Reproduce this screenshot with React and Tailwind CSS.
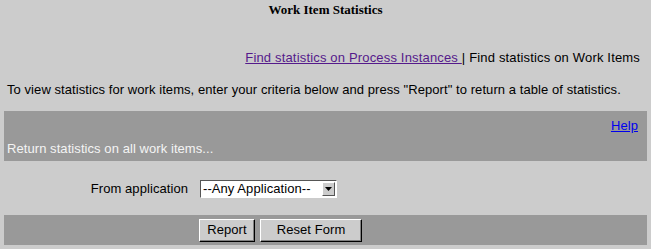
import {useState} from "react";

const App = () => {
    const [app, setApp] = useState("--Any Application--");

    return (
        <div className="min-h-[249px] bg-[#cccccc] px-[4px] font-['Liberation_Sans',Arial,sans-serif] text-[13px] leading-[16px] tracking-[0.07px] text-black">
            <div className="pt-[2px] h-[40px] text-center font-['Liberation_Serif',serif] font-bold text-[13px] tracking-normal">
                Work Item Statistics
            </div>
            <div className="h-[32px] pt-[10px] pr-[7px] text-right tracking-[0.17px]">
                <a href="#" className="text-[#551a8b] underline">Find statistics on Process Instances </a>
                | Find statistics on Work Items
            </div>
            <p className="h-[39px] pt-[10px] px-[3px]">
                To view statistics for work items, enter your criteria below and press "Report" to return a table of statistics.
            </p>
            <div className="h-[50px] bg-[#999999] flex flex-col justify-between px-[3px] pt-[7px] pb-[4px] text-[#f4f4f4]">
                <div className="text-right pr-[6px]">
                    <a href="#" className="text-[#0000ee] underline">Help</a>
                </div>
                <div>Return statistics on all work items...</div>
            </div>
            <div className="h-[54px] flex items-center pt-[2px]">
                <span className="w-[196px] text-right pr-[12px]">From application</span>
                <div className="flex items-center w-[137px] h-[18px] bg-white border border-t-[#555555] border-l-[#555555] border-r-white border-b-white">
                    <span className="flex-1 pl-[2px] leading-[16px]">{app}</span>
                    <button
                        onClick={() => setApp("--Any Application--")}
                        className="w-[13px] h-[14px] mr-[1px] bg-[#cccccc] border border-t-white border-l-white border-r-[#555555] border-b-[#555555] flex items-center justify-center"
                    >
                        <svg width="7" height="4" viewBox="0 0 7 4"><path d="M0 0h7L3.5 4z" fill="#000"/></svg>
                    </button>
                </div>
            </div>
            <div className="h-[30px] bg-[#999999] flex items-center pl-[195px] gap-[5px]">
                <button className="w-[56px] h-[23px] bg-[#cccccc] border border-t-white border-l-white border-r-black border-b-black shadow-[inset_-1px_-1px_0_#808080]">
                    Report
                </button>
                <button className="w-[102px] h-[23px] bg-[#cccccc] border border-t-white border-l-white border-r-black border-b-black shadow-[inset_-1px_-1px_0_#808080]">
                    Reset Form
                </button>
            </div>
        </div>
    );
};

export default App;
